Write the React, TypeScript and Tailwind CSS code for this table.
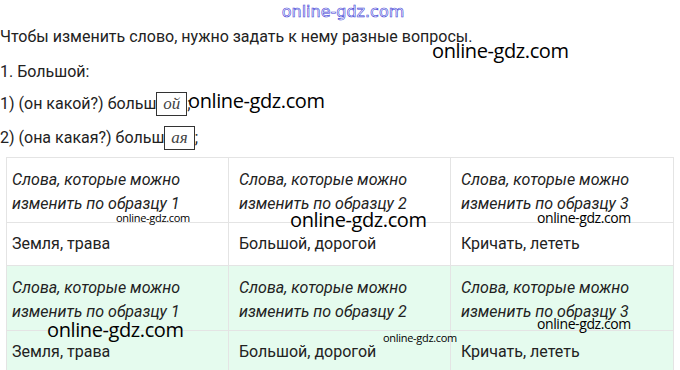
import React from 'react';

const Mark: React.FC<{ className: string }> = ({ className }) => (
  <span
    className={`absolute whitespace-nowrap text-black leading-none font-medium ${className}`}
    style={{ fontFamily: '"Open Sans", sans-serif' }}
  >
    online-gdz.com
  </span>
);

const Box: React.FC<{ children: React.ReactNode }> = ({ children }) => (
  <span
    className="inline-block border border-[#333] px-[6px] leading-[22px] text-[17px] italic text-[#444]"
    style={{ fontFamily: '"Liberation Serif", serif' }}
  >
    {children}
  </span>
);

const headCell =
  'pl-[10px] first:pl-[5px] pr-[4px] pt-[10px] pb-[6px] italic leading-[24px] border-r border-[#e4e4e4] last:border-r-0';
const bodyCell =
  'pl-[10px] first:pl-[5px] pr-[4px] py-[10px] leading-[22px] border-r border-[#e4e4e4] last:border-r-0';

const App: React.FC = () => {
  const heads = ['изменить по образцу 1', 'изменить по образцу 2', 'изменить по образцу 3'];
  const words = ['Земля, трава', 'Большой, дорогой', 'Кричать, лететь'];
  return (
    <div
      className="relative w-[680px] h-[370px] overflow-hidden bg-white text-[16px] text-[#222]"
      style={{ fontFamily: 'Roboto, sans-serif' }}
    >
      <div className="h-[25px] flex justify-center pt-[3px] pl-[6px]">
        <span
          className="text-[16px] leading-[18px] text-transparent [-webkit-text-stroke:0.6px_#3b3bd6]"
          style={{ fontFamily: '"DejaVu Sans", sans-serif' }}
        >
          online-gdz.com
        </span>
      </div>
      <p className="leading-[24px]">Чтобы изменить слово, нужно задать к нему разные вопросы.</p>
      <p className="mt-[11px] leading-[24px]">1. Большой:</p>
      <p className="mt-[8px] leading-[24px]">
        1) (он какой?) больш<Box>ой</Box>;
      </p>
      <p className="mt-[10px] leading-[24px]">
        2) (она какая?) больш<Box>ая</Box>;
      </p>
      <div className="mx-[6px] mt-[7px] border border-[#e4e4e4]">
        <div className="grid grid-cols-3 border-b border-[#e4e4e4]">
          {heads.map((h) => (
            <div key={h} className={headCell}>
              Слова, которые можно
              <br />
              {h}
            </div>
          ))}
        </div>
        <div className="grid grid-cols-3 border-b border-[#e4e4e4]">
          {words.map((w) => (
            <div key={w} className={bodyCell}>
              {w}
            </div>
          ))}
        </div>
        <div className="grid grid-cols-3 bg-[#e5fbee] border-b border-[#e4e4e4]">
          {heads.map((h) => (
            <div key={h} className={headCell}>
              Слова, которые можно
              <br />
              {h}
            </div>
          ))}
        </div>
        <div className="grid grid-cols-3 bg-[#e5fbee]">
          {words.map((w) => (
            <div key={w} className={bodyCell}>
              {w}
            </div>
          ))}
        </div>
      </div>

      <Mark className="left-[432px] top-[41px] text-[20px] tracking-[-0.4px]" />
      <Mark className="left-[188px] top-[91px] text-[20px] tracking-[-0.4px]" />
      <Mark className="left-[116px] top-[212px] text-[11px] tracking-[-0.3px]" />
      <Mark className="left-[290px] top-[210px] text-[20px] tracking-[-0.4px]" />
      <Mark className="left-[537px] top-[211px] text-[14px] tracking-[-0.4px]" />
      <Mark className="left-[47px] top-[320px] text-[20px] tracking-[-0.4px]" />
      <Mark className="left-[383px] top-[332px] text-[11px] tracking-[-0.3px]" />
      <Mark className="left-[537px] top-[317px] text-[14px] tracking-[-0.4px]" />
    </div>
  );
};

export default App;
